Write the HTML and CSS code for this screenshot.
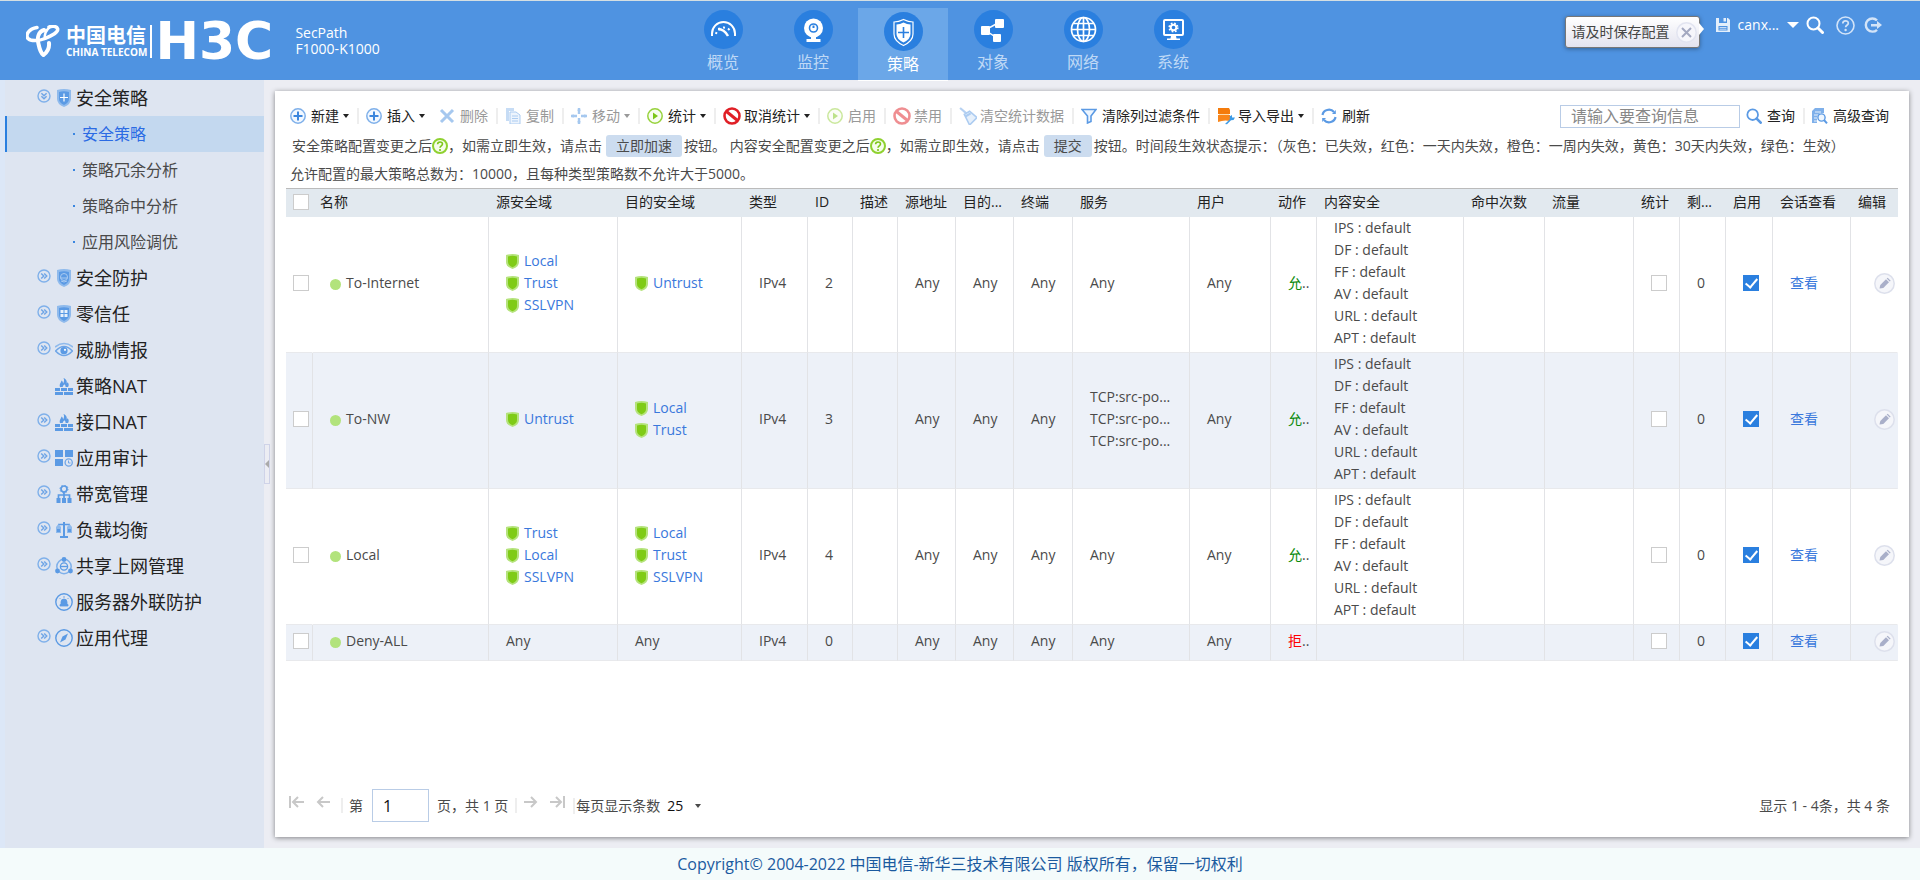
FILE: index.html
```
<!DOCTYPE html>
<html lang="zh-CN">
<head>
    <meta charset="UTF-8">
    <meta name="viewport" content="width=device-width, initial-scale=1.0">
    <title>SecPath F1000-K1000</title>
    <link rel="stylesheet" href="styles.css">
</head>
<body>
    <!-- shared icons -->
    <svg class="icon-defs" aria-hidden="true">
        <symbol id="i-expand" viewBox="0 0 14 14">
            <circle cx="7" cy="7" r="6" fill="none" stroke="#7fb0ea" stroke-width="1.4"/>
            <path d="M4.2 4.4L6.8 7 4.2 9.6M7.2 4.4L9.8 7 7.2 9.6" fill="none" stroke="#6fa5e6" stroke-width="1.4"/>
        </symbol>
        <symbol id="i-collapse" viewBox="0 0 14 14">
            <circle cx="7" cy="7" r="6" fill="none" stroke="#7fb0ea" stroke-width="1.4"/>
            <path d="M4.4 4.2L7 6.8 9.6 4.2M4.4 7.2L7 9.8 9.6 7.2" fill="none" stroke="#6fa5e6" stroke-width="1.4"/>
        </symbol>
        <symbol id="i-fire" viewBox="0 0 18 18">
            <path d="M5 10C4 7 6 6 6.500 3.500 8 4.500 8 5.500 8 6.500 9 5 9.500 3 8.500 1 12 2.500 12 5 11.700 6.500L12.600 5.200C14.500 7.500 13.500 9 13 10H10.500C11 8.500 10 8 9.200 7.200 9 8.500 7.500 8.500 7.800 10z"/>
            <path d="M0 11h5v3H0zM6 11h6v3H6zM13 11h5v3h-5zM0 15h8v3H0zM9 15h9v3H9z"/>
        </symbol>
        <symbol id="i-shield" viewBox="0 0 13 15">
            <path d="M0 1q6.500-2 13 0v7q0 5-6.500 7Q0 13 0 8z" fill="#b5e37c"/>
            <path d="M2 2.500q4.500-1.500 9 0V8q0 3.500-4.500 5.300Q2 11.500 2 8z" fill="#7fcb16"/>
        </symbol>
        <symbol id="i-plus" viewBox="0 0 16 16">
            <circle cx="8" cy="8" r="7.200" fill="#f2f8ff" stroke="#7fb0ea" stroke-width="1.500"/>
            <path d="M8 3.500v9M3.500 8h9" stroke="#3c86dd" stroke-width="2"/>
        </symbol>
        <symbol id="i-play" viewBox="0 0 16 16">
            <circle cx="8" cy="8" r="7.200" fill="#f8fdf0" stroke="#97d23c" stroke-width="1.500"/>
            <path d="M6 4.500L11 8l-5 3.500z" fill="#7cc618"/>
        </symbol>
        <symbol id="i-ban" viewBox="0 0 18 18">
            <circle cx="9" cy="9" r="7.500" fill="#fff" stroke="#e01f26" stroke-width="2.600"/>
            <path d="M3.500 4.500l11 9" stroke="#e01f26" stroke-width="3"/>
        </symbol>
        <symbol id="i-help" viewBox="0 0 16 16">
            <circle cx="8" cy="8" r="7" fill="#f6fcec" stroke="#8fd130" stroke-width="2"/>
            <path d="M5.600 6.300c0-3.200 4.900-3 4.900-.2C10.500 8 8 7.800 8 9.800" fill="none" stroke="#7cc618" stroke-width="1.600"/>
            <circle cx="8" cy="12" r="1.100" fill="#7cc618"/>
        </symbol>
        <symbol id="i-search" viewBox="0 0 18 18">
            <circle cx="7.500" cy="7.500" r="6" fill="none" stroke="currentColor" stroke-width="2"/>
            <path d="M12 12l4.500 4.500" stroke="currentColor" stroke-width="3" stroke-linecap="round"/>
        </symbol>
        <symbol id="i-edit" viewBox="0 0 21 21">
            <circle cx="10.500" cy="10.500" r="9.700" fill="#f5f6fa" stroke="#dde0ec" stroke-width="1.500"/>
            <path d="M5.500 15.500l.8-3.500 5.700-5.700 3 3-5.700 5.700z" fill="#a9afc9"/>
            <path d="M12.700 5.600l1-.9 3 3-1 .9z" fill="#a9afc9"/>
        </symbol>
    </svg>

    <header class="header">
        <div class="brand">
            <svg class="telecom-mark" viewBox="0 0 34 32">
                <path d="M11 2.500C3 3.500-1 10 2 13.500c3 3 11 2.500 17 0C26 10.500 33 7 31.500 3.500 30.500 1 26 .8 23 2" fill="none" stroke="#fff" stroke-width="3.500" stroke-linecap="round"/>
                <path d="M18 5C12 7 11 13 12.500 19c1 5 2 9 5 11 4-3 6-7 5.500-12" fill="none" stroke="#fff" stroke-width="4" stroke-linecap="round"/>
                <path d="M24 2c-4 3-6 8-5 13" fill="none" stroke="#fff" stroke-width="2.500"/>
            </svg>
            <div class="telecom-name">
                <span class="telecom-cn">中国电信</span>
                <span class="telecom-en">CHINA TELECOM</span>
            </div>
            <span class="h3c">H3C</span>
            <div class="model">SecPath<br>F1000-K1000</div>
        </div>

        <nav class="nav">
            <a href="#" class="nav-item">
                <svg viewBox="0 0 39 39"><circle cx="19.500" cy="19.500" r="19.500" fill="#2a7fdf"/><g fill="none" stroke="#fff"><path d="M8 26v-2.500a11.500 11.500 0 0 1 23 0V26" stroke-width="2"/><path d="M12 24a8 8 0 0 1 15-2" stroke-width="2" stroke-dasharray="2 3"/><path d="M14 19q6 0 10 7" stroke-width="2.500"/></g></svg>
                <span>概览</span>
            </a>
            <a href="#" class="nav-item">
                <svg viewBox="0 0 39 39"><circle cx="19.500" cy="19.500" r="19.500" fill="#2a7fdf"/><circle cx="19.500" cy="18" r="9.500" fill="#fff"/><circle cx="19.500" cy="18" r="4" fill="none" stroke="#2a7fdf" stroke-width="1.600"/><path d="M19.500 18v-2.500" stroke="#2a7fdf" stroke-width="2"/><path d="M17 27h5v2h4.500v3h-14v-3H17z" fill="#fff"/></svg>
                <span>监控</span>
            </a>
            <a href="#" class="nav-item active">
                <svg viewBox="0 0 39 39"><circle cx="19.500" cy="19.500" r="19.500" fill="#2a7fdf"/><path d="M19.500 7.500q5 2.500 9.500 2.500v12q0 7-9.500 11.500Q10 29 10 22V10q4.500 0 9.500-2.500z" fill="none" stroke="#fff" stroke-width="1.200"/><path d="M19.500 10.500q3.500 1.800 7 2v9.500q0 5-7 8.500-7-3.500-7-8.500v-9.500q3.500-.2 7-2z" fill="#fff"/><path d="M19.500 15v11M14 20.500h11" stroke="#2a7fdf" stroke-width="1.600"/></svg>
                <span>策略</span>
            </a>
            <a href="#" class="nav-item">
                <svg viewBox="0 0 39 39"><circle cx="19.500" cy="19.500" r="19.500" fill="#2a7fdf"/><path d="M24 13L11 20l12 8" fill="none" stroke="#fff" stroke-width="1.500"/><rect x="21" y="9" width="9" height="9" rx="1" fill="#fff"/><rect x="7" y="16" width="9" height="9" rx="1" fill="#fff"/><rect x="19" y="24" width="8" height="8" rx="1" fill="#fff"/></svg>
                <span>对象</span>
            </a>
            <a href="#" class="nav-item">
                <svg viewBox="0 0 39 39"><circle cx="19.500" cy="19.500" r="19.500" fill="#2a7fdf"/><g fill="none" stroke="#fff" stroke-width="1.700"><circle cx="19.500" cy="19.500" r="12"/><ellipse cx="19.500" cy="19.500" rx="6" ry="12"/><path d="M19.500 7.500v24M7.500 19.500h24M9.500 13.500h20M9.500 25.500h20"/></g></svg>
                <span>网络</span>
            </a>
            <a href="#" class="nav-item">
                <svg viewBox="0 0 39 39"><circle cx="19.500" cy="19.500" r="19.500" fill="#2a7fdf"/><rect x="10" y="10" width="19" height="15" rx="1" fill="none" stroke="#fff" stroke-width="2"/><path d="M17 26h5l.5 2.500H26v1.500H13v-1.500h3.500z" fill="#fff"/><circle cx="19.500" cy="17.500" r="2.800" fill="none" stroke="#fff" stroke-width="2"/><circle cx="19.500" cy="17.500" r="4.300" fill="none" stroke="#fff" stroke-width="1.600" stroke-dasharray="1.700 1.700"/></svg>
                <span>系统</span>
            </a>
        </nav>

        <div class="user-area">
            <div class="save-tip">
                <span>请及时保存配置</span>
                <button class="tip-close" aria-label="关闭"><svg viewBox="0 0 21 21"><circle cx="10.500" cy="10.500" r="9.700" fill="#f6f6fb" stroke="#e2e4f0" stroke-width="1.500"/><path d="M6 6l9 9M15 6l-9 9" stroke="#a3a8c0" stroke-width="2"/></svg></button>
            </div>
            <a href="#" class="user-link" aria-label="保存"><svg width="14" height="14" viewBox="0 0 14 14"><path d="M0 0h3v5h8V0h1l2 2v12H0z" fill="#e4effb"/><path d="M7.500 0H10v3.500H7.500z" fill="#e4effb"/><path d="M2.500 8h9v4.500h-9z" fill="#4f93e1"/><path d="M3.500 9.500h7M3.500 11.200h7" stroke="#c8dcf5"/></svg></a>
            <a href="#" class="user-name">canx... <svg width="12" height="6" viewBox="0 0 12 6"><path d="M0 0h12L6 6z" fill="#fff"/></svg></a>
            <a href="#" class="user-link" aria-label="搜索"><svg width="18" height="18"><use href="#i-search"/></svg></a>
            <a href="#" class="user-link help" aria-label="帮助"><svg width="19" height="19" viewBox="0 0 19 19"><circle cx="9.500" cy="9.500" r="8.500" fill="none" stroke="#d3e4f8" stroke-width="1.600"/><path d="M6.800 7.500c0-3.600 5.500-3.400 5.500-.3 0 2-2.700 2-2.700 4" fill="none" stroke="#d3e4f8" stroke-width="1.700"/><circle cx="9.600" cy="14" r="1.200" fill="#d3e4f8"/></svg></a>
            <a href="#" class="user-link" aria-label="退出"><svg width="18" height="17" viewBox="0 0 18 17"><path d="M13 3.300A6.600 6.600 0 1 0 13 12.800" fill="none" stroke="#d3e4f8" stroke-width="2.400"/><path d="M7 7h6V4l5 4-5 4V9.500H7z" fill="#d3e4f8"/></svg></a>
        </div>
    </header>

    <main class="main">
        <aside class="sidebar">
            <ul class="menu">
                <li><a href="#" class="menu-item">
                    <svg class="arrow"><use href="#i-collapse"/></svg>
                    <svg class="menu-icon" viewBox="0 0 18 18"><path d="M2 1q7-2 14 0v9q0 5-7 8-7-3-7-8z" fill="#8fbaec"/><path d="M4 3q5-1.500 10 0v7q0 3.500-5 6-5-2.500-5-6z"/><path d="M9 4.500v8M5 8.500h8" stroke="#fff" stroke-width="1.200"/></svg>
                    安全策略</a>
                    <ul class="submenu">
                        <li><a href="#" class="active">安全策略</a></li>
                        <li><a href="#">策略冗余分析</a></li>
                        <li><a href="#">策略命中分析</a></li>
                        <li><a href="#">应用风险调优</a></li>
                    </ul>
                </li>
                <li><a href="#" class="menu-item">
                    <svg class="arrow"><use href="#i-expand"/></svg>
                    <svg class="menu-icon" viewBox="0 0 18 18"><path d="M2 1q7-2 14 0v9q0 5-7 8-7-3-7-8z" fill="#8fbaec"/><path d="M4 3q5-1.500 10 0v7q0 3.500-5 6-5-2.500-5-6z"/><g fill="none" stroke="#a9caf1"><circle cx="9" cy="8" r="3.500"/><path d="M5 9h8M6 12q3 2 6 0"/></g></svg>
                    安全防护</a></li>
                <li><a href="#" class="menu-item">
                    <svg class="arrow"><use href="#i-expand"/></svg>
                    <svg class="menu-icon" viewBox="0 0 18 18"><path d="M2 1q7-2 14 0v9q0 5-7 8-7-3-7-8z" fill="#8fbaec"/><path d="M4 3q5-1.500 10 0v7q0 3.500-5 6-5-2.500-5-6z"/><path d="M5.500 5h3v3h-3zM9.500 5h3v3h-3zM5.500 9h3v3h-3zM9.500 9h3v3h-3z" fill="#e8f1fc"/></svg>
                    零信任</a></li>
                <li><a href="#" class="menu-item">
                    <svg class="arrow"><use href="#i-expand"/></svg>
                    <svg class="menu-icon" viewBox="0 0 18 18"><path d="M0 6q9-7 18 0" fill="none" stroke="#8fbaec" stroke-width="1.600"/><path d="M.5 10q8.500-9 17 0-8.500 9-17 0z" fill="#dbe8f8" stroke="#6fa5e6" stroke-width="1.500"/><circle cx="9" cy="9.700" r="3.600"/><circle cx="10" cy="8.800" r="1.100" fill="#fff"/></svg>
                    威胁情报</a></li>
                <li><a href="#" class="menu-item">
                    <span class="arrow"></span>
                    <svg class="menu-icon"><use href="#i-fire"/></svg>
                    策略NAT</a></li>
                <li><a href="#" class="menu-item">
                    <svg class="arrow"><use href="#i-expand"/></svg>
                    <svg class="menu-icon"><use href="#i-fire"/></svg>
                    接口NAT</a></li>
                <li><a href="#" class="menu-item">
                    <svg class="arrow"><use href="#i-expand"/></svg>
                    <svg class="menu-icon" viewBox="0 0 18 18"><path d="M0 1h8v7H0zM10 1h8v7h-8zM0 10h8v7H0z"/><circle cx="13.700" cy="13.500" r="3.600" fill="none" stroke="#6fa5e6" stroke-width="1.300"/><path d="M13.500 11.500V14h2" fill="none" stroke="#6fa5e6"/></svg>
                    应用审计</a></li>
                <li><a href="#" class="menu-item">
                    <svg class="arrow"><use href="#i-expand"/></svg>
                    <svg class="menu-icon" viewBox="0 0 18 18"><g fill="none" stroke="#5b9ae4" stroke-width="1.700"><circle cx="9" cy="4" r="3"/><path d="M9 7v8M3.500 14v-4h11v4"/></g><circle cx="9" cy="4" r="4" fill="none" stroke="#5b9ae4" stroke-dasharray="1.500 1.600"/><path d="M1.500 13h4v5h-4zM7 13h4v5H7zM12.500 13h4v5h-4z"/></svg>
                    带宽管理</a></li>
                <li><a href="#" class="menu-item">
                    <svg class="arrow"><use href="#i-expand"/></svg>
                    <svg class="menu-icon" viewBox="0 0 18 18"><path d="M8 1h2v14h3v2H5v-2h3z"/><path d="M3 3.500h12" stroke="#5b9ae4" stroke-width="1.500"/><path d="M1 6l2-2.500h1L6 6v6H1zM12 6l2-2.500h1L17 6v6h-5z" fill="#8fbaec"/><path d="M2 8h3v3H2zM13 8h3v3h-3z"/></svg>
                    负载均衡</a></li>
                <li><a href="#" class="menu-item">
                    <svg class="arrow"><use href="#i-expand"/></svg>
                    <svg class="menu-icon" viewBox="0 0 18 18"><circle cx="9" cy="9.500" r="7.200" fill="none" stroke="#7fb0ea" stroke-width="1.500"/><g fill="none" stroke="#5b9ae4" stroke-width="1.300"><circle cx="9" cy="9.500" r="3.600"/><path d="M5.500 9.500h7"/></g><circle cx="9" cy="2.500" r="2.400"/><circle cx="2.500" cy="14" r="2.400"/><circle cx="15.500" cy="14" r="2.400"/></svg>
                    共享上网管理</a></li>
                <li><a href="#" class="menu-item">
                    <span class="arrow"></span>
                    <svg class="menu-icon" viewBox="0 0 18 18"><circle cx="9" cy="9" r="8.200" fill="none" stroke="#5b9ae4" stroke-width="1.400"/><path d="M6 11.500V9a3 3 0 0 1 6 0v2.500h1V13H5v-1.500zM9 3v2M4.500 5l1 1M13.500 5l-1 1" stroke="#5b9ae4" stroke-width=".8"/></svg>
                    服务器外联防护</a></li>
                <li><a href="#" class="menu-item">
                    <svg class="arrow"><use href="#i-expand"/></svg>
                    <svg class="menu-icon" viewBox="0 0 18 18"><circle cx="9" cy="9" r="8.200" fill="none" stroke="#5b9ae4" stroke-width="1.400"/><path d="M13 4.500l-2.500 6L5 13.500 7.500 7.500z"/></svg>
                    应用代理</a></li>
            </ul>
        </aside>
        <button class="side-toggle" aria-label="收起菜单"></button>

        <section class="panel">
            <div class="toolbar">
                <button class="tool caret"><svg><use href="#i-plus"/></svg>新建</button>
                <button class="tool caret"><svg><use href="#i-plus"/></svg>插入</button>
                <button class="tool no-line" disabled><svg viewBox="0 0 16 16"><path d="M2 2l12 12M14 2L2 14" stroke="#4f93e1" stroke-width="3"/></svg>删除</button>
                <button class="tool" disabled><svg viewBox="0 0 16 16"><path d="M1 0h8v3H4v10H1z" fill="#8fbaec"/><path d="M5 4h6l4 3v9H5z" fill="#dcebfc" stroke="#5b9ae4"/><path d="M7 8h6M7 10.500h6M7 13h6" stroke="#5b9ae4"/></svg>复制</button>
                <button class="tool caret" disabled><svg viewBox="0 0 16 16"><path d="M8 0v6M8 10v6M0 8h6M10 8h6" stroke="#4f93e1" stroke-width="2.400"/><path d="M6 2.500L8 0l2 2.500zM6 13.500L8 16l2-2.500zM2.500 6L0 8l2.500 2zM13.500 6L16 8l-2.500 2z" fill="#4f93e1"/></svg>移动</button>
                <button class="tool caret"><svg><use href="#i-play"/></svg>统计</button>
                <button class="tool caret wide"><svg><use href="#i-ban"/></svg>取消统计</button>
                <button class="tool" disabled><svg><use href="#i-play"/></svg>启用</button>
                <button class="tool wide" disabled><svg><use href="#i-ban"/></svg>禁用</button>
                <button class="tool wide" disabled><svg viewBox="0 0 17 17"><path d="M1 1l6 5" stroke="#6fa5e6" stroke-width="2"/><path d="M5 7l5-3 7 6-7 7z" fill="#cfe2f9" stroke="#5b9ae4" stroke-width="1.500"/><path d="M6 9l5-3" stroke="#5b9ae4" stroke-width="2"/></svg>清空统计数据</button>
                <button class="tool"><svg viewBox="0 0 16 16"><path d="M1 1.500h14L10 8v5.500L6.500 15V8z" fill="#eef6ff" stroke="#5b9ae4" stroke-width="1.600"/></svg>清除列过滤条件</button>
                <button class="tool caret wide"><svg viewBox="0 0 18 18"><path d="M1 1h11l1 2v4H1z" fill="#f47b0c"/><path d="M1 8h12v6q-6-1.500-12 1z" fill="#f9861a"/><path d="M2 7.500h10" stroke="#ffd9a8"/><path d="M8 17l5-5-.5-2.500L15 8v2.500h3l-1.500 2.500-2.500.3-4 4z" fill="#3c9be6"/></svg>导入导出</button>
                <button class="tool"><svg viewBox="0 0 16 16"><path d="M1.500 7A6.500 6 0 0 1 13 4M14.500 9A6.500 6 0 0 1 3 12" fill="none" stroke="#5b9ae4" stroke-width="2.200"/><path d="M14.800 2v4H11zM1.200 14v-4H5z" fill="#5b9ae4"/></svg>刷新</button>

                <form class="query">
                    <input type="text" class="query-input" placeholder="请输入要查询信息" aria-label="查询信息">
                    <button type="button" class="tool no-line first"><svg class="blue"><use href="#i-search"/></svg>查询</button>
                    <button type="button" class="tool"><svg viewBox="0 0 16 16"><path d="M3 0h9v5H8L5 9v6H0V3z" fill="#7fb0ea"/><path d="M3 4h6M2 7h4M2 10h3M2 13h3" stroke="#e8f1fc"/><circle cx="9.500" cy="9.500" r="3.600" fill="#eef6ff" stroke="#5b9ae4" stroke-width="1.400"/><path d="M12 12l3 3.300" stroke="#5b9ae4" stroke-width="2"/></svg>高级查询</button>
                </form>
            </div>

            <p class="note first-note">安全策略配置变更之后<svg class="note-help"><use href="#i-help"/></svg>，如需立即生效，请点击<button class="note-btn">立即加速</button>按钮。 内容安全配置变更之后<svg class="note-help"><use href="#i-help"/></svg>，如需立即生效，请点击<button class="note-btn">提交</button>按钮。时间段生效状态提示：（灰色：已失效，红色：一天内失效，橙色：一周内失效，黄色：30天内失效，绿色：生效）</p>
            <p class="note">允许配置的最大策略总数为：10000，且每种类型策略数不允许大于5000。</p>

            <table class="policy">
                <colgroup>
                    <col class="w27"><col class="w176"><col class="w129"><col class="w124"><col class="w66"><col class="w45"><col class="w45"><col class="w58"><col class="w58"><col class="w59"><col class="w117"><col class="w81"><col class="w46"><col class="w147"><col class="w81"><col class="w89"><col class="w46"><col class="w46"><col class="w47"><col class="w78"><col class="w47">
                </colgroup>
                <thead>
                    <tr>
                        <th class="check"><input type="checkbox" aria-label="全选"></th>
                        <th>名称</th><th>源安全域</th><th>目的安全域</th><th>类型</th><th>ID</th><th>描述</th><th>源地址</th><th>目的...</th><th>终端</th><th>服务</th><th>用户</th><th>动作</th><th>内容安全</th><th>命中次数</th><th>流量</th><th>统计</th><th>剩...</th><th>启用</th><th>会话查看</th><th>编辑</th>
                    </tr>
                </thead>
                <tbody>
                    <tr>
                        <td class="check"><input type="checkbox" aria-label="选择 To-Internet"></td>
                        <td><span class="name">To-Internet</span></td>
                        <td><a href="#" class="zone"><svg><use href="#i-shield"/></svg>Local</a><a href="#" class="zone"><svg><use href="#i-shield"/></svg>Trust</a><a href="#" class="zone"><svg><use href="#i-shield"/></svg>SSLVPN</a></td>
                        <td><a href="#" class="zone"><svg><use href="#i-shield"/></svg>Untrust</a></td>
                        <td>IPv4</td><td>2</td><td></td><td>Any</td><td>Any</td><td>Any</td><td>Any</td><td>Any</td>
                        <td><span class="allow">允</span>..</td>
                        <td>IPS : default<br>DF : default<br>FF : default<br>AV : default<br>URL : default<br>APT : default</td>
                        <td></td><td></td>
                        <td><input type="checkbox" aria-label="统计"></td>
                        <td>0</td>
                        <td><input type="checkbox" aria-label="启用" checked></td>
                        <td><a href="#">查看</a></td>
                        <td class="edit"><button aria-label="编辑"><svg><use href="#i-edit"/></svg></button></td>
                    </tr>
                    <tr>
                        <td class="check"><input type="checkbox" aria-label="选择 To-NW"></td>
                        <td><span class="name">To-NW</span></td>
                        <td><a href="#" class="zone"><svg><use href="#i-shield"/></svg>Untrust</a></td>
                        <td><a href="#" class="zone"><svg><use href="#i-shield"/></svg>Local</a><a href="#" class="zone"><svg><use href="#i-shield"/></svg>Trust</a></td>
                        <td>IPv4</td><td>3</td><td></td><td>Any</td><td>Any</td><td>Any</td>
                        <td>TCP:src-po...<br>TCP:src-po...<br>TCP:src-po...</td>
                        <td>Any</td>
                        <td><span class="allow">允</span>..</td>
                        <td>IPS : default<br>DF : default<br>FF : default<br>AV : default<br>URL : default<br>APT : default</td>
                        <td></td><td></td>
                        <td><input type="checkbox" aria-label="统计"></td>
                        <td>0</td>
                        <td><input type="checkbox" aria-label="启用" checked></td>
                        <td><a href="#">查看</a></td>
                        <td class="edit"><button aria-label="编辑"><svg><use href="#i-edit"/></svg></button></td>
                    </tr>
                    <tr>
                        <td class="check"><input type="checkbox" aria-label="选择 Local"></td>
                        <td><span class="name">Local</span></td>
                        <td><a href="#" class="zone"><svg><use href="#i-shield"/></svg>Trust</a><a href="#" class="zone"><svg><use href="#i-shield"/></svg>Local</a><a href="#" class="zone"><svg><use href="#i-shield"/></svg>SSLVPN</a></td>
                        <td><a href="#" class="zone"><svg><use href="#i-shield"/></svg>Local</a><a href="#" class="zone"><svg><use href="#i-shield"/></svg>Trust</a><a href="#" class="zone"><svg><use href="#i-shield"/></svg>SSLVPN</a></td>
                        <td>IPv4</td><td>4</td><td></td><td>Any</td><td>Any</td><td>Any</td><td>Any</td><td>Any</td>
                        <td><span class="allow">允</span>..</td>
                        <td>IPS : default<br>DF : default<br>FF : default<br>AV : default<br>URL : default<br>APT : default</td>
                        <td></td><td></td>
                        <td><input type="checkbox" aria-label="统计"></td>
                        <td>0</td>
                        <td><input type="checkbox" aria-label="启用" checked></td>
                        <td><a href="#">查看</a></td>
                        <td class="edit"><button aria-label="编辑"><svg><use href="#i-edit"/></svg></button></td>
                    </tr>
                    <tr>
                        <td class="check"><input type="checkbox" aria-label="选择 Deny-ALL"></td>
                        <td><span class="name">Deny-ALL</span></td>
                        <td>Any</td><td>Any</td>
                        <td>IPv4</td><td>0</td><td></td><td>Any</td><td>Any</td><td>Any</td><td>Any</td><td>Any</td>
                        <td><span class="deny">拒</span>..</td>
                        <td></td><td></td><td></td>
                        <td><input type="checkbox" aria-label="统计"></td>
                        <td>0</td>
                        <td><input type="checkbox" aria-label="启用" checked></td>
                        <td><a href="#">查看</a></td>
                        <td class="edit"><button aria-label="编辑"><svg><use href="#i-edit"/></svg></button></td>
                    </tr>
                </tbody>
            </table>

            <div class="pager">
                <button class="page-btn" aria-label="首页"><svg viewBox="0 0 16 14"><path d="M1 1v12M15 7H4M9 2L4 7l5 5"/></svg></button>
                <button class="page-btn" aria-label="上一页"><svg viewBox="0 0 16 14"><path d="M15 7H3M8 2L3 7l5 5"/></svg></button>
                <span class="line"></span>
                <label for="page-no">第</label>
                <input type="text" id="page-no" class="page-no" value="1">
                <span>页，共 1 页</span>
                <span class="line"></span>
                <button class="page-btn" aria-label="下一页"><svg viewBox="0 0 16 14"><path d="M1 7h12M8 2l5 5-5 5"/></svg></button>
                <button class="page-btn last" aria-label="末页"><svg viewBox="0 0 16 14"><path d="M15 1v12M1 7h11M7 2l5 5-5 5"/></svg></button>
                <label for="page-size" class="size-label">每页显示条数</label>
                <span class="caret">
                    <select id="page-size" class="page-size"><option>25</option><option>50</option></select>
                </span>
                <span class="total">显示 1 - 4条，共 4 条</span>
            </div>
        </section>
    </main>

    <footer class="footer">Copyright© 2004-2022 中国电信-新华三技术有限公司 版权所有，保留一切权利</footer>
</body>
</html>
```
FILE: styles.css
```
* {
    margin: 0;
    padding: 0;
    box-sizing: border-box;
}

body {
    display: flex;
    flex-direction: column;
    min-height: 100vh;
    background-color: #ecedf3;
    color: #4a4a4a;
    font-family: 'Open Sans', 'Noto Sans CJK SC', sans-serif;
    font-size: 14px;
    line-height: 22px;
}

button,
input,
select {
    font: inherit;
    color: inherit;
    border: none;
    background: none;
}

button {
    cursor: pointer;
}

a {
    color: #3a78dc;
    text-decoration: none;
}

ul {
    list-style: none;
}

.icon-defs {
    display: none;
}

/* Header */
.header {
    display: grid;
    grid-template-columns: 1fr auto 1fr;
    height: 80px;
    padding-right: 24px;
    border-top: 1px solid #d5dfe2;
    background-color: #4f93e1;
    color: #fff;
}

.brand {
    display: flex;
    align-items: center;
    height: 80px;
    padding-left: 26px;
}

.telecom-mark {
    width: 34px;
    height: 32px;
}

.telecom-name {
    display: flex;
    flex-direction: column;
    margin: 0 3px 0 6px;
    padding-right: 3px;
    border-right: 2px solid #fff;
    font-weight: bold;
    white-space: nowrap;
}

.telecom-cn {
    font-size: 20px;
    line-height: 22px;
}

.telecom-en {
    font-size: 10px;
    line-height: 11px;
}

.h3c {
    width: 140px;
    font-family: 'DejaVu Sans', sans-serif;
    font-size: 52px;
    font-weight: bold;
    line-height: 32px;
}

.model {
    line-height: 16px;
}

.nav {
    display: flex;
    padding-top: 7px;
}

.nav-item {
    display: flex;
    flex-direction: column;
    align-items: center;
    width: 90px;
    padding-top: 2px;
    color: #bfd9f6;
    font-size: 16px;
    line-height: 22px;
}

.nav-item svg {
    width: 39px;
    height: 39px;
    margin-bottom: 2px;
}

.nav-item.active {
    padding-top: 4px;
    border-bottom: 1px solid #fff;
    background-color: #6ba7e8;
    color: #fff;
}

.user-area {
    display: flex;
    justify-content: flex-end;
    align-items: center;
    height: 48px;
    padding-right: 14px;
}

.save-tip {
    position: relative;
    display: flex;
    align-items: center;
    justify-content: space-between;
    width: 135px;
    height: 32px;
    margin: 14px 16px 0 0;
    padding: 0 2px 0 6px;
    border: 1px solid #777;
    border-radius: 3px;
    background: linear-gradient(#fff, #e3e3ef);
    box-shadow: 0 1px 4px rgba(0, 0, 0, 0.35);
    color: #444;
    white-space: nowrap;
}

.save-tip::after {
    content: '';
    position: absolute;
    left: 100%;
    top: 6px;
    border: 6px solid transparent;
    border-left: 5px solid #fff;
    border-right: none;
}

.tip-close,
.tip-close svg {
    display: block;
    flex: none;
    width: 21px;
    height: 21px;
}

.user-link,
.user-name {
    display: flex;
    align-items: center;
    color: #fff;
}

.user-link.help {
    margin: 0 9px 0 12px;
}

.user-name {
    gap: 8px;
    margin: 0 7px 0 8px;
}

/* Sidebar */
.main {
    flex: 1;
    display: flex;
}

.sidebar {
    flex: none;
    width: 264px;
    border-left: 5px solid #dce7f7;
    background-color: #dee5f1;
}

.menu-item {
    display: flex;
    align-items: center;
    height: 36px;
    padding-left: 32px;
    color: #222;
    font-size: 18px;
}

.arrow {
    width: 14px;
    height: 14px;
    margin: 0 4px 4px 0;
}

.menu-icon {
    width: 18px;
    height: 18px;
    margin-right: 3px;
    fill: #5b9ae4;
}

.submenu a {
    display: flex;
    align-items: center;
    height: 36px;
    padding-left: 66px;
    border-left: 2px solid transparent;
    color: #4a4a4a;
    font-size: 16px;
}

.submenu a::before {
    content: '';
    width: 2px;
    height: 2px;
    margin-right: 7px;
    background-color: #3a86e0;
}

.submenu a.active {
    border-left-color: #2a7fdf;
    background-color: #c3d8ef;
    color: #2b6be4;
}

.side-toggle {
    display: flex;
    align-items: center;
    align-self: center;
    width: 6px;
    height: 40px;
    border: 1px solid #cfd3e8;
}

.side-toggle::before {
    content: '';
    border: 4px solid transparent;
    border-right-color: #aaa;
    border-left: none;
}

/* Content */
.panel {
    flex: 1;
    display: flex;
    flex-direction: column;
    min-width: 0;
    margin: 11px 11px 11px 5px;
    padding: 14px 11px 15px;
    background-color: #fff;
    box-shadow: 0 1px 5px rgba(0, 0, 0, 0.45);
}

.toolbar {
    display: flex;
    align-items: center;
    height: 22px;
    padding-right: 1px;
}

.tool {
    display: flex;
    align-items: center;
    height: 16px;
    padding: 0 8px 0 7px;
    border-left: 2px solid #eee;
    color: #222;
    white-space: nowrap;
}

.tool:first-child {
    padding-left: 4px;
    border-left: none;
}

.tool.no-line {
    padding-left: 4px;
    border-left-color: transparent;
}

.tool svg {
    width: 16px;
    height: 16px;
    margin-right: 5px;
}

.tool.wide svg {
    width: 18px;
    height: 18px;
    margin-right: 3px;
}

.tool svg.blue {
    color: #5b9ae4;
}

.tool:disabled {
    color: #999;
}

.tool:disabled svg {
    opacity: 0.5;
}

.caret {
    display: flex;
    align-items: center;
}

.caret::after {
    content: '';
    margin-left: 4px;
    border: 3px solid transparent;
    border-top: 4px solid currentColor;
    border-bottom: none;
}

.query {
    display: flex;
    align-items: center;
    margin-left: auto;
}

.query-input {
    width: 180px;
    height: 23px;
    padding: 0 10px;
    border: 1px solid #b9cce6;
    font-size: 16px;
}

.query-input::placeholder {
    color: #888;
}

.query .tool:last-child {
    padding-right: 8px;
}

.note {
    height: 22px;
    margin: 6px 0 0 4px;
    white-space: nowrap;
}

.note.first-note {
    display: flex;
    align-items: center;
    margin: 8px 0 0 6px;
}

.note-help {
    flex: none;
    width: 16px;
    height: 16px;
}

.note-btn {
    height: 22px;
    margin: 0 2px 0 4px;
    padding: 0 10px;
    border-radius: 3px;
    background-color: #ccdcef;
}

/* Policy table */
.policy {
    width: 100%;
    margin-top: 3px;
    border-top: 1px solid #bbb;
    border-collapse: separate;
    border-spacing: 0;
    table-layout: fixed;
}

.w27 { width: 27px; }
.w45 { width: 45px; }
.w46 { width: 46px; }
.w47 { width: 47px; }
.w58 { width: 58px; }
.w59 { width: 59px; }
.w66 { width: 66px; }
.w78 { width: 78px; }
.w81 { width: 81px; }
.w89 { width: 89px; }
.w117 { width: 117px; }
.w124 { width: 124px; }
.w129 { width: 129px; }
.w147 { width: 147px; }
.w176 { width: 176px; }

.policy th {
    height: 28px;
    padding: 0 0 2px 7px;
    background-color: #e2e9ef;
    color: #222;
    font-weight: normal;
    text-align: left;
    white-space: nowrap;
}

.policy td {
    height: 36px;
    padding: 0 0 3px 17px;
    border-right: 1px solid #e2e3e6;
    border-bottom: 1px solid #e8e9ec;
    white-space: nowrap;
}

.policy tbody tr:nth-child(even) {
    background-color: #edf1f8;
}

.policy td:last-child,
.policy tr:nth-child(odd) td.check {
    border-right-color: transparent;
}

.policy .check {
    padding-left: 7px;
}

.policy input {
    display: block;
    appearance: none;
    width: 16px;
    height: 16px;
    border: 1px solid #ccc;
    background-color: #fff;
}

.policy input:checked {
    border-color: #2a7fdf;
    background-color: #2a7fdf;
}

.policy input:checked::after {
    content: '';
    display: block;
    width: 5px;
    height: 10px;
    margin: 0 auto;
    border: solid #fff;
    border-width: 0 2px 2px 0;
    transform: rotate(40deg);
}

.name {
    display: flex;
    align-items: center;
    gap: 5px;
}

.name::before {
    content: '';
    width: 11px;
    height: 11px;
    margin-top: 3px;
    border-radius: 50%;
    background-color: #b2e37c;
}

.zone {
    display: flex;
    align-items: center;
    gap: 5px;
}

.zone svg {
    width: 13px;
    height: 15px;
}

.allow {
    color: #0a8a0a;
}

.deny {
    color: #f00;
}

.policy td.edit {
    padding-left: 23px;
}

.edit button,
.edit svg {
    display: block;
    width: 21px;
    height: 21px;
}

/* Pager */
.pager {
    display: flex;
    align-items: center;
    height: 33px;
    margin-top: auto;
    padding: 0 8px 0 3px;
}

.page-btn {
    display: flex;
    width: 16px;
    margin: 0 10px 7px 0;
}

.page-btn.last {
    margin-right: 8px;
}

.page-btn svg {
    width: 16px;
    height: 14px;
    fill: none;
    stroke: #c8c8c8;
    stroke-width: 2;
}

.line {
    width: 2px;
    height: 15px;
    margin-right: 6px;
    background-color: #eee;
}

.page-no {
    width: 57px;
    height: 33px;
    margin: 0 8px 0 9px;
    padding: 0 10px;
    border: 1px solid #b9cce6;
    color: #111;
    font-size: 16px;
}

.pager .page-no + span {
    margin-right: 7px;
}

.size-label {
    padding-left: 1px;
    border-left: 2px solid #eee;
    line-height: 16px;
}

.page-size {
    appearance: none;
    width: 24px;
    margin-left: 7px;
    color: #111;
}

.total {
    margin-left: auto;
}

/* Footer */
.footer {
    height: 32px;
    background-color: #f4fbfb;
    color: #1b5a9f;
    font-size: 16px;
    line-height: 32px;
    text-align: center;
}
```
